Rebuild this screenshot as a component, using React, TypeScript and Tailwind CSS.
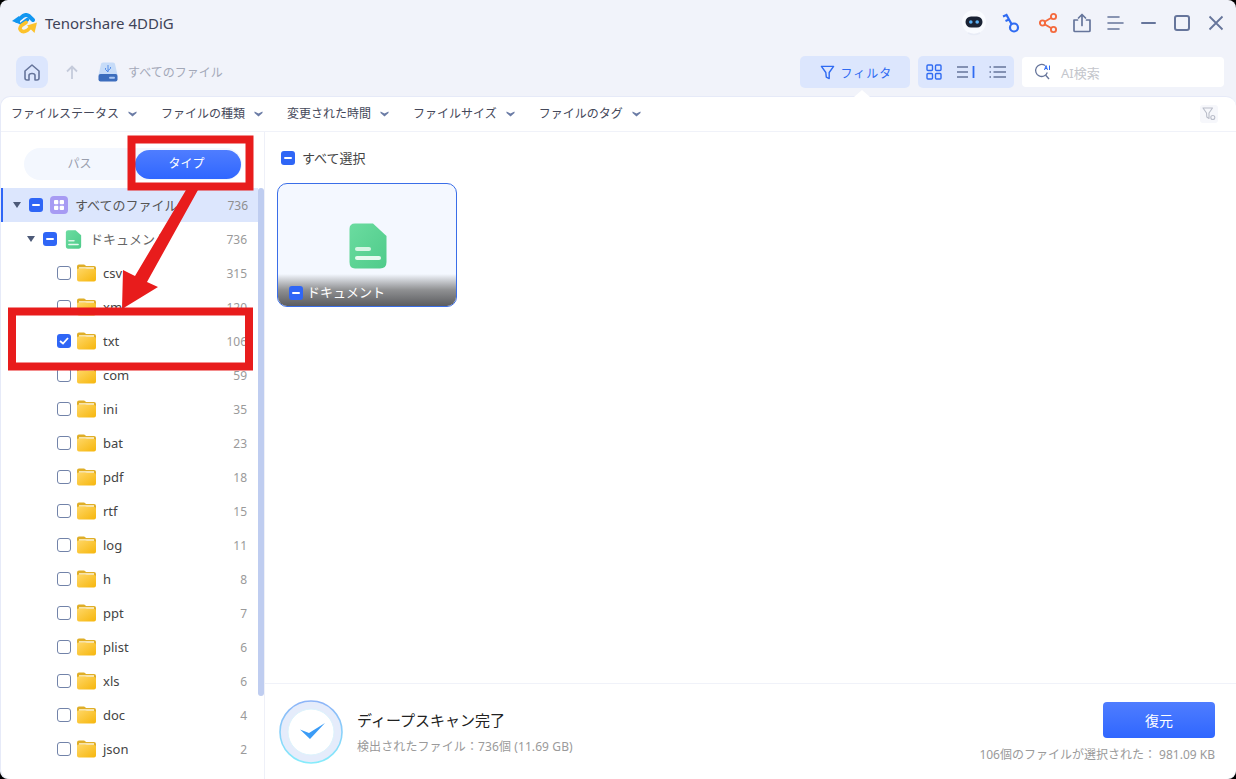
import React from 'react';

const font = { fontFamily: '"Noto Sans", "Noto Sans CJK JP", sans-serif' };

const filters = ['ファイルステータス', 'ファイルの種類', '変更された時間', 'ファイルサイズ', 'ファイルのタグ'];

const leaves: [string, number][] = [
  ['csv', 315],
  ['xml', 120],
  ['txt', 106],
  ['com', 59],
  ['ini', 35],
  ['bat', 23],
  ['pdf', 18],
  ['rtf', 15],
  ['log', 11],
  ['h', 8],
  ['ppt', 7],
  ['plist', 6],
  ['xls', 6],
  ['doc', 4],
  ['json', 2],
];

function Logo() {
  return (
    <svg width="25" height="21" viewBox="0 0 25 21" fill="none" strokeLinecap="round">
      <path d="M5 8 L11 3 Q14 1 17 3 L21 7" stroke="#1296f0" strokeWidth="4" />
      <path d="M15.5 6.5 L9.5 11" stroke="#1296f0" strokeWidth="3.5" />
      <path d="M0 8 L7 3 L8.5 11.5 Z" fill="#1296f0" />
      <path d="M14 9.5 L9.5 12.5 Q7 15 8.5 17 Q11 20 15 17.5 L19 14" stroke="#fcc22c" strokeWidth="3.6" />
      <path d="M15 12.5 L25 9.5 L22.5 20 Z" fill="#fcc22c" />
    </svg>
  );
}

function Robot() {
  return (
    <svg width="28" height="28" viewBox="0 0 28 28" fill="none">
      <circle cx="14" cy="13" r="12" fill="#f9fbff" />
      <rect x="5.5" y="7.5" width="17" height="11" rx="5.5" fill="#1b2334" />
      <circle cx="10.8" cy="13" r="1.8" fill="#5bb1f5" />
      <circle cx="17.2" cy="13" r="1.8" fill="#5bb1f5" />
      <path d="M8 24 Q14 27 20 24" stroke="#e8ecf6" strokeWidth="1.5" />
    </svg>
  );
}

function Key() {
  return (
    <svg width="20" height="24" viewBox="0 0 20 24" fill="none" stroke="#2f6bf2" strokeWidth="2.2">
      <circle cx="13" cy="16.5" r="4" />
      <path d="M10.5 13 L5 3 M5.5 4 L2 5.5 M8 8.5 L4.5 10" />
    </svg>
  );
}

function Share() {
  return (
    <svg width="20" height="22" viewBox="0 0 20 22" fill="none" stroke="#f46a3e" strokeWidth="1.9">
      <circle cx="15.5" cy="4.5" r="2.6" />
      <circle cx="4.5" cy="11" r="2.6" />
      <circle cx="15.5" cy="17.5" r="2.6" />
      <path d="M7 9.5 L13 6 M7 12.5 L13 16" />
    </svg>
  );
}

function Upload() {
  return (
    <svg width="20" height="20" viewBox="0 0 20 20" fill="none" stroke="#66759b" strokeWidth="1.7" strokeLinecap="round" strokeLinejoin="round">
      <path d="M5.5 7 H2 V17.5 Q2 18.5 3 18.5 H17 Q18 18.5 18 17.5 V7 H14.5" />
      <path d="M10 12.5 V2 M6.5 5 L10 1.5 L13.5 5" />
    </svg>
  );
}

function Menu() {
  return (
    <svg width="18" height="16" viewBox="0 0 18 16" fill="none" stroke="#66759b" strokeWidth="1.6" strokeLinecap="round">
      <path d="M1 2 H12 M1 8 H16 M1 14 H12" />
    </svg>
  );
}

function Home() {
  return (
    <svg width="16" height="17" viewBox="0 0 16 17" fill="none" stroke="#66759b" strokeWidth="1.6" strokeLinejoin="round">
      <path d="M1 7 L8 1 L15 7 V14 Q15 16 13 16 H11 V11.5 Q11 9.5 8 9.5 Q5 9.5 5 11.5 V16 H3 Q1 16 1 14 Z" />
    </svg>
  );
}

function Drive() {
  return (
    <svg width="20" height="20" viewBox="0 0 20 20" fill="none">
      <path d="M3 2 Q3 0.5 5 0.5 H15 Q17 0.5 17 2 L19.5 13 H0.5 Z" fill="#c7dcf8" />
      <path d="M10 3 V10 M10 10 L7.5 7.5 V6 M10 8.5 L12.5 6.5 V5" stroke="#4a86e8" strokeWidth="0.9" />
      <rect x="0.5" y="12" width="19" height="7.5" rx="2" fill="#3c6dbd" />
      <rect x="11" y="14.8" width="6" height="2" rx="1" fill="#a9c6f3" />
    </svg>
  );
}

function Funnel({ color, size }: { color: string; size: number }) {
  return (
    <svg width={size} height={size} viewBox="0 0 16 16" fill="none" stroke={color} strokeWidth="1.5" strokeLinejoin="round">
      <path d="M1.5 1.5 H14.5 L9.8 8 V14.5 L6.7 13 L6.2 8 Z" />
    </svg>
  );
}

function FunnelClear() {
  return (
    <svg width="14" height="14" viewBox="0 0 14 14" fill="none" stroke="#b9bdc9" strokeWidth="1.1" strokeLinejoin="round">
      <path d="M1 1 H10.5 L7 6 V11.5 L4.8 10 L4.5 6 Z" />
      <circle cx="10.8" cy="10.5" r="2" />
    </svg>
  );
}

function GridView() {
  return (
    <svg width="16" height="16" viewBox="0 0 16 16" fill="none" stroke="#2f6bf2" strokeWidth="1.4">
      <rect x="1" y="1" width="5.5" height="5.5" rx="1" />
      <rect x="9.5" y="1" width="5.5" height="5.5" rx="1" />
      <rect x="1" y="9.5" width="5.5" height="5.5" rx="1" />
      <rect x="9.5" y="9.5" width="5.5" height="5.5" rx="1" />
    </svg>
  );
}

function DetailView() {
  return (
    <svg width="18" height="14" viewBox="0 0 18 14" fill="none" stroke="#66759b" strokeWidth="1.4">
      <path d="M0 2 H11 M0 7 H11 M0 12 H11" />
      <path d="M16.5 1 V13" stroke="#2f6bf2" strokeWidth="1.8" />
    </svg>
  );
}

function ListView() {
  return (
    <svg width="18" height="14" viewBox="0 0 18 14" fill="none" stroke="#66759b" strokeWidth="1.4">
      <path d="M4.5 2 H17 M4.5 7 H17 M4.5 12 H17" />
      <path d="M0.5 2 H2 M0.5 7 H2 M0.5 12 H2" />
    </svg>
  );
}

function AiSearch() {
  return (
    <svg width="18" height="18" viewBox="0 0 18 18" fill="none" stroke="#66759b" strokeWidth="1.3">
      <path d="M11 2.5 A6 6 0 1 0 13.3 9.5" />
      <path d="M11.5 12 L15 16" />
      <path d="M10.5 7 L12 2.5 L13.5 7 M11 5.5 H13 M15.5 2.5 V7" stroke="#2f6bf2" strokeWidth="1" />
    </svg>
  );
}

function Chevron() {
  return (
    <svg width="9" height="6" viewBox="0 0 9 6" className="shrink-0">
      <path d="M0.5 0.5 L4.5 2.5 L8.5 0.5 V2 L4.5 5.5 L0.5 2 Z" fill="#6a7ba5" />
    </svg>
  );
}

function Caret() {
  return (
    <svg width="8" height="6" viewBox="0 0 8 6" className="shrink-0">
      <path d="M0 0 H8 L4 6 Z" fill="#4d5a78" />
    </svg>
  );
}

function Minus({ className = '' }: { className?: string }) {
  return (
    <span className={`flex h-[14px] w-[14px] shrink-0 items-center justify-center rounded-[3px] bg-[#2f66f6] ${className}`}>
      <span className="h-[2px] w-[8px] rounded-sm bg-white" />
    </span>
  );
}

function CheckBox({ checked }: { checked?: boolean }) {
  if (checked) {
    return (
      <span className="flex h-[14px] w-[14px] shrink-0 items-center justify-center rounded-[3px] bg-[#2f66f6]">
        <svg width="10" height="8" viewBox="0 0 10 8" fill="none" stroke="#fff" strokeWidth="1.8">
          <path d="M1 4 L4 6.5 L9 1" />
        </svg>
      </span>
    );
  }
  return <span className="h-[14px] w-[14px] shrink-0 rounded-[3px] border border-[#7283a9] bg-white" />;
}

function Folder() {
  return (
    <svg width="19" height="18" viewBox="0 0 19 18" className="shrink-0">
      <defs>
        <linearGradient id="folderBody" x1="0" y1="0" x2="1" y2="1">
          <stop offset="0" stopColor="#ffd766" />
          <stop offset="1" stopColor="#f6b60c" />
        </linearGradient>
      </defs>
      <path d="M0 2.5 Q0 0.5 2 0.5 H7 Q8 0.5 9 2 H17 Q19 2 19 4 V8 H0 Z" fill="#dfae27" />
      <rect x="2" y="3" width="15" height="3" fill="#f7e4ad" />
      <path d="M0 5.5 Q0 4.5 2 4.5 H8 L10 5 H17 Q19 5 19 7 V15.5 Q19 17.5 17 17.5 H2 Q0 17.5 0 15.5 Z" fill="url(#folderBody)" />
    </svg>
  );
}

function DocIcon({ w, h }: { w: number; h: number }) {
  return (
    <svg width={w} height={h} viewBox="0 0 38 46" className="shrink-0">
      <defs>
        <linearGradient id={`doc${w}`} x1="0" y1="0" x2="1" y2="1">
          <stop offset="0" stopColor="#6bdca0" />
          <stop offset="1" stopColor="#4fcb8a" />
        </linearGradient>
      </defs>
      <path d="M6 0.5 H24 L37.5 13 V39 Q37.5 45.5 31 45.5 H6 Q0.5 45.5 0.5 39 V6 Q0.5 0.5 6 0.5 Z" fill={`url(#doc${w})`} />
      <rect x="6" y="24" width="16" height="4" rx="2" fill="#d6f5e4" />
      <rect x="6" y="33" width="26" height="4" rx="2" fill="#e6f9ef" />
    </svg>
  );
}

function AllIcon() {
  return (
    <svg width="18" height="18" viewBox="0 0 18 18" className="shrink-0">
      <rect width="18" height="18" rx="4" fill="#a79bf3" />
      <rect x="4" y="4" width="4.3" height="4.3" rx="1" fill="#fff" />
      <rect x="9.7" y="4" width="4.3" height="4.3" rx="1" fill="#fff" />
      <rect x="4" y="9.7" width="4.3" height="4.3" rx="1" fill="#fff" />
      <rect x="9.7" y="9.7" width="4.3" height="4.3" rx="1" fill="#fff" />
    </svg>
  );
}

function ScanDone() {
  return (
    <svg width="64" height="64" viewBox="0 0 64 64" fill="none" className="shrink-0">
      <defs>
        <linearGradient id="ring" x1="0" y1="0" x2="0" y2="1">
          <stop offset="0" stopColor="#8db4f8" />
          <stop offset="1" stopColor="#86ecfb" />
        </linearGradient>
      </defs>
      <circle cx="32" cy="32" r="31" fill="#e5ecfb" stroke="url(#ring)" strokeWidth="1.6" />
      <circle cx="32" cy="32" r="23" fill="#fff" stroke="#dcf3fc" />
      <path d="M21 29.5 L30 33 L46 23 L31 39 Z" fill="#3a9bf6" />
    </svg>
  );
}

function LeafRow({ name, count }: { name: string; count: number }) {
  return (
    <div className="flex h-[34px] items-center pl-[56px] pr-[17px]">
      <CheckBox checked={name === 'txt'} />
      <span className="ml-[6px]">
        <Folder />
      </span>
      <span className="ml-[7px] mt-[2px] flex-1 text-[13px] text-[#444]">{name}</span>
      <span className="mt-[2px] text-[12px] text-[#9a9a9a]">{count}</span>
    </div>
  );
}

export default function App() {
  return (
    <div className="h-[779px] w-[1236px] overflow-hidden bg-black" style={font}>
      <div className="flex h-full flex-col overflow-hidden rounded-[8px] bg-[#f1f3fa]">
        <div className="flex h-[46px] shrink-0 items-center pl-[12px] pr-[12px]">
          <Logo />
          <span className="ml-[8px] text-[15px] text-[#3f4358]">Tenorshare 4DDiG</span>
          <div className="ml-auto flex items-center">
            <Robot />
            <span className="ml-[13px]">
              <Key />
            </span>
            <span className="ml-[17px]">
              <Share />
            </span>
            <span className="ml-[14px]">
              <Upload />
            </span>
            <span className="ml-[15px]">
              <Menu />
            </span>
            <span className="ml-[16px] h-[2px] w-[15px] rounded bg-[#66759b]" />
            <span className="ml-[18px] h-[16px] w-[16px] rounded-[3px] border-2 border-[#66759b]" />
            <svg width="16" height="16" viewBox="0 0 16 16" fill="none" stroke="#66759b" strokeWidth="1.8" className="ml-[18px]">
              <path d="M1.5 1.5 L14.5 14.5 M14.5 1.5 L1.5 14.5" />
            </svg>
          </div>
        </div>

        <div className="mt-[10px] flex h-[32px] shrink-0 items-center pl-[16px] pr-[12px]">
          <div className="flex h-[32px] w-[32px] items-center justify-center rounded-[8px] bg-[#dce6fd]">
            <Home />
          </div>
          <svg width="12" height="14" viewBox="0 0 12 14" fill="none" stroke="#c5cbdb" strokeWidth="1.8" className="ml-[18px]">
            <path d="M6 14 V1.5 M1 6.5 L6 1.5 L11 6.5" />
          </svg>
          <span className="ml-[20px]">
            <Drive />
          </span>
          <span className="ml-[10px] mt-[2px] text-[12px] text-[#a3a8b8]">すべてのファイル</span>

          <div className="ml-auto flex h-[32px] w-[110px] items-center justify-center rounded-[5px] bg-[#dce6fd] pl-[2px]">
            <Funnel color="#2f6bf2" size={15} />
            <span className="ml-[6px] mt-[3px] text-[12px] tracking-[1px] text-[#2f6bf2]">フィルタ</span>
          </div>
          <div className="ml-[8px] flex h-[32px] w-[96px] items-center justify-between rounded-[5px] bg-[#dce6fd] pl-[8px] pr-[7px]">
            <GridView />
            <DetailView />
            <ListView />
          </div>
          <div className="ml-[8px] flex h-[30px] w-[202px] items-center rounded-[4px] bg-white pl-[12px]">
            <AiSearch />
            <span className="ml-[9px] mt-[3px] text-[13px] text-[#c4c6cc]">AI検索</span>
          </div>
        </div>

        <div className="relative mt-[8px] flex min-h-0 flex-1 flex-col rounded-[10px] border-l border-t border-[#e6eaf8] bg-white">
          <span className="absolute -top-[7px] left-[853px] h-0 w-0 border-x-[8px] border-b-[7px] border-x-transparent border-b-white" />
          <div className="flex h-[35px] shrink-0 items-center gap-[24px] border-b border-[#f0f2f9] pl-[10px] pr-[18px] text-[12px] text-[#45485a]">
            {filters.map((f) => (
              <div key={f} className="flex items-center gap-[9px]">
                <span>{f}</span>
                <Chevron />
              </div>
            ))}
            <div className="ml-auto flex h-[18px] w-[18px] items-center justify-center rounded-[3px] bg-[#f6f7fb]">
              <FunnelClear />
            </div>
          </div>

          <div className="flex min-h-0 flex-1">
            <div className="relative w-[264px] shrink-0 border-r border-[#eef0f8]">
              <div className="ml-[23px] mr-[22px] mt-[16px] flex h-[32px] items-center rounded-full bg-[#f3f7fe] pr-[1px]">
                <span className="w-[111px] text-center text-[12px] text-[#9a9fae]">パス</span>
                <span className="flex h-[29px] flex-1 items-center justify-center rounded-full bg-gradient-to-b from-[#4f7dff] to-[#2f66ff] pr-[3px] text-[12px] text-white">
                  タイプ
                </span>
              </div>

              <div className="mt-[8px]">
                <div className="mr-[6px] flex h-[34px] items-center border-l-2 border-[#2f66f6] bg-[#dce6fd] pl-[10px] pr-[10px]">
                  <Caret />
                  <Minus className="ml-[8px]" />
                  <span className="ml-[7px]">
                    <AllIcon />
                  </span>
                  <span className="ml-[7px] mt-[2px] flex-1 text-[13px] text-[#555]">すべてのファイル</span>
                  <span className="mt-[2px] text-[12px] text-[#8f8f8f]">736</span>
                </div>
                <div className="flex h-[34px] items-center pl-[26px] pr-[17px]">
                  <Caret />
                  <Minus className="ml-[8px]" />
                  <span className="ml-[8px]">
                    <DocIcon w={17} h={19} />
                  </span>
                  <span className="ml-[8px] mt-[2px] flex-1 text-[13px] text-[#666]">ドキュメント</span>
                  <span className="mt-[2px] text-[12px] text-[#9a9a9a]">736</span>
                </div>
                {leaves.map(([name, count]) => (
                  <LeafRow key={name} name={name} count={count} />
                ))}
              </div>

              <div className="absolute right-0 top-[56px] h-[508px] w-[6px] rounded-[3px] bg-[#bfcdf0]" />
            </div>

            <div className="flex min-w-0 flex-1 flex-col">
              <div className="flex-1 pl-[12px] pt-[19px]">
                <div className="ml-[4px] flex h-[14px] items-center">
                  <Minus />
                  <span className="ml-[7px] mt-[2px] text-[13px] text-[#444]">すべて選択</span>
                </div>
                <div className="relative mt-[18px] flex h-[124px] w-[180px] items-center justify-center overflow-hidden rounded-[10px] border border-[#3a6ee8] bg-[#f4f8ff] pl-[2px] pt-[2px]">
                  <DocIcon w={38} h={46} />
                  <div className="absolute inset-x-0 bottom-0 flex h-[32px] items-center bg-gradient-to-b from-[#f4f8ff] via-[#8f9092] to-[#5c5d60] pl-[11px] pt-[5px]">
                    <Minus />
                    <span className="ml-[4px] text-[13px] text-white">ドキュメント</span>
                  </div>
                </div>
              </div>

              <div className="flex h-[96px] shrink-0 border-t border-[#f0f2f9] pl-[14px] pr-[21px]">
                <div className="mt-[16px] flex items-start">
                  <ScanDone />
                  <div className="ml-[14px] mt-[8px]">
                    <div className="text-[15px] leading-[24px] text-[#222]">ディープスキャン完了</div>
                    <div className="mt-[7px] text-[12px] leading-[16px] tracking-[0.1px] text-[#9a9a9a]">検出されたファイル：736個 (11.69 GB)</div>
                  </div>
                </div>
                <div className="ml-auto flex flex-col items-end pt-[18px]">
                  <div className="flex h-[36px] w-[112px] items-center justify-center rounded-[4px] bg-gradient-to-b from-[#4f7dff] to-[#2f66ff] text-[14px] text-white">
                    復元
                  </div>
                  <div className="mt-[9px] text-[12px] leading-[16px] text-[#9a9a9a]">106個のファイルが選択された：&nbsp;981.09 KB</div>
                </div>
              </div>
            </div>
          </div>
        </div>
      </div>

      <svg width="1236" height="779" className="pointer-events-none absolute left-0 top-0" fill="none">
        <rect x="131.5" y="139.5" width="118" height="47" stroke="#e81c1c" strokeWidth="8" />
        <rect x="12" y="311.5" width="237" height="55" stroke="#e81c1c" strokeWidth="8" />
        <path d="M186 190 H198 L147 282 L158 287 L122 309 L123 270 L135 276 Z" fill="#e81c1c" />
      </svg>
    </div>
  );
}
